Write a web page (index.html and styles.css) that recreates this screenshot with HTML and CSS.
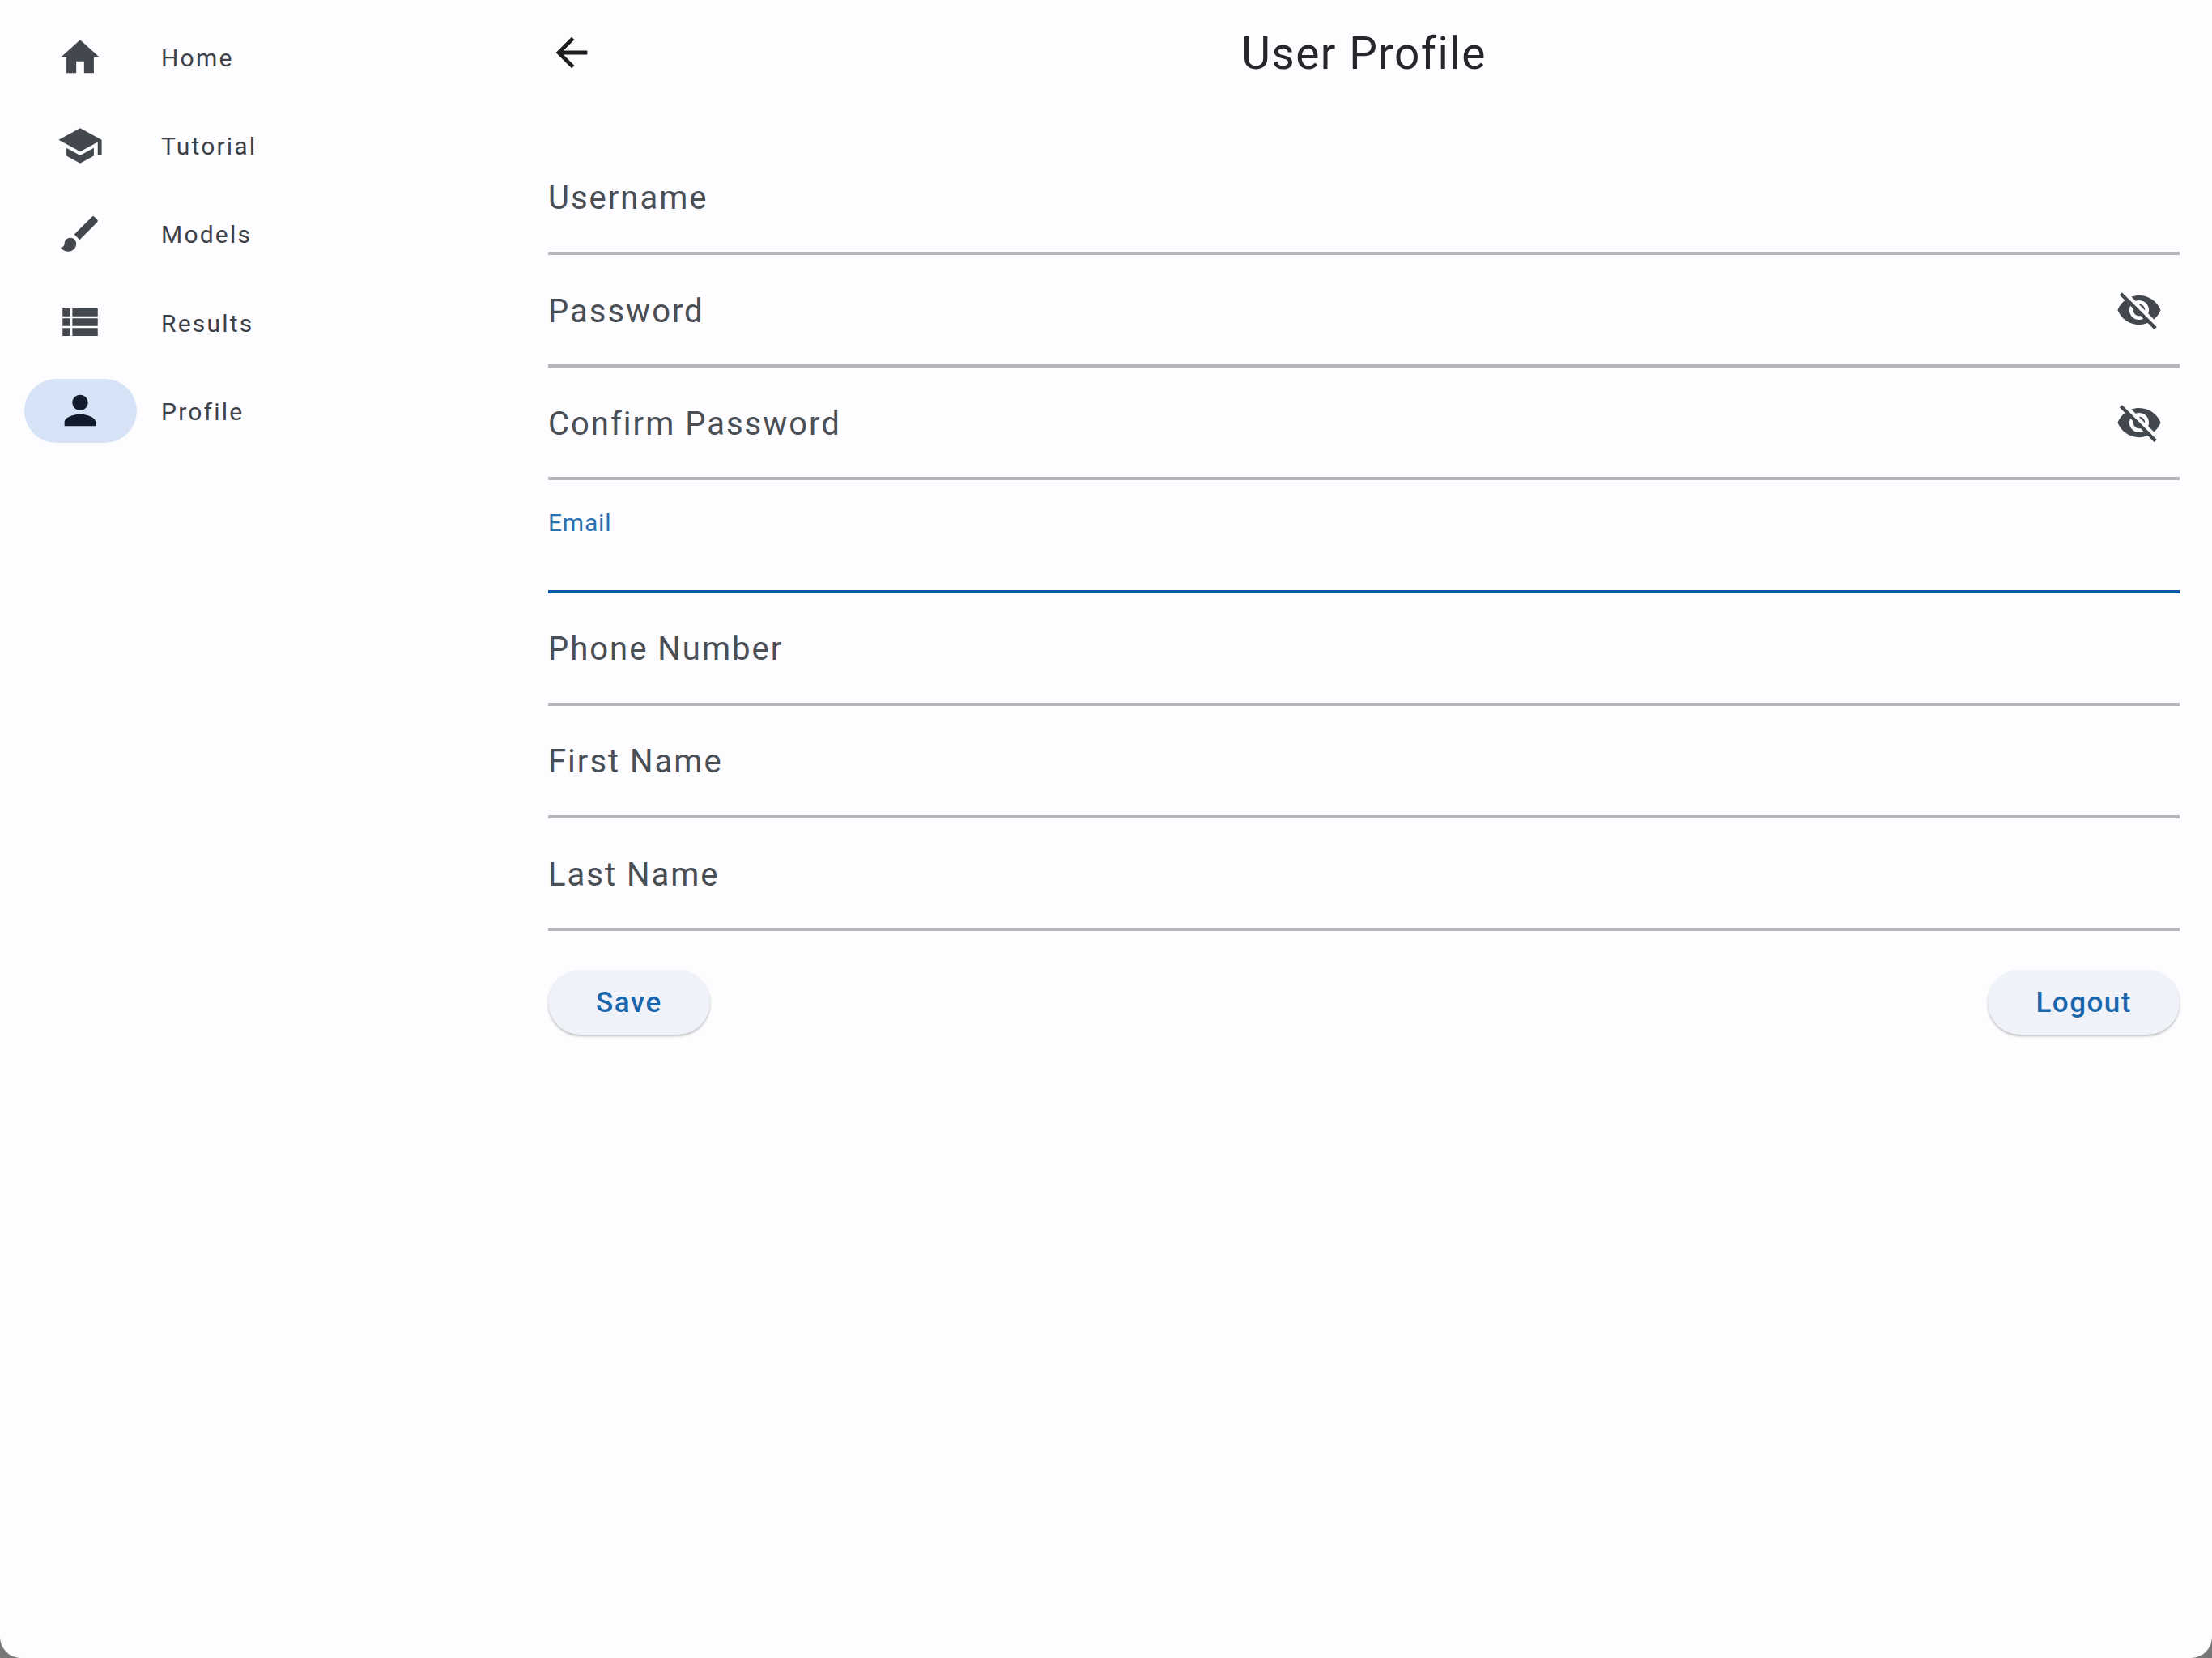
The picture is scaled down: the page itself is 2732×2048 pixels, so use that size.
FILE: index.html
```html
<!DOCTYPE html>
<html lang="en">
  <head>
    <meta charset="UTF-8" />
    <meta name="viewport" content="width=device-width, initial-scale=1.0" />
    <title>User Profile</title>
    <link rel="stylesheet" href="styles.css">
  </head>
  <body>
    <div class="window">
      <nav class="rail">
        <a class="rail-item">
          <span class="rail-pill">
            <svg class="icon" viewBox="0 0 24 24"><path d="M10 20v-6h4v6h5v-8h3L12 3 2 12h3v8z"/></svg>
          </span>
          <span class="rail-label">Home</span>
        </a>
        <a class="rail-item">
          <span class="rail-pill">
            <svg class="icon" viewBox="0 0 24 24"><path d="M5 13.18v4L12 21l7-3.82v-4L12 17l-7-3.82zM12 3 1 9l11 6 9-4.91V17h2V9L12 3z"/></svg>
          </span>
          <span class="rail-label">Tutorial</span>
        </a>
        <a class="rail-item">
          <span class="rail-pill">
            <svg class="icon" viewBox="0 0 24 24"><path d="M7 14c-1.66 0-3 1.34-3 3 0 1.31-1.16 2-2 2 .92 1.22 2.49 2 4 2 2.21 0 4-1.79 4-4 0-1.66-1.34-3-3-3zm13.71-9.37-1.34-1.34a.9959.9959 0 0 0-1.41 0L9 12.25 11.75 15l8.96-8.96c.39-.39.39-1.02 0-1.41z"/></svg>
          </span>
          <span class="rail-label">Models</span>
        </a>
        <a class="rail-item">
          <span class="rail-pill">
            <svg class="icon" viewBox="0 0 24 24"><path d="M3 14h4v-4H3v4zm0 5h4v-4H3v4zM3 9h4V5H3v4zm5 5h13v-4H8v4zm0 5h13v-4H8v4zM8 5v4h13V5H8z"/></svg>
          </span>
          <span class="rail-label">Results</span>
        </a>
        <a class="rail-item active">
          <span class="rail-pill">
            <svg class="icon" viewBox="0 0 24 24"><path d="M12 12c2.21 0 4-1.79 4-4s-1.79-4-4-4-4 1.79-4 4 1.79 4 4 4zm0 2c-2.67 0-8 1.34-8 4v2h16v-2c0-2.66-5.33-4-8-4z"/></svg>
          </span>
          <span class="rail-label">Profile</span>
        </a>
      </nav>

      <main class="content">
        <header class="app-bar">
          <svg class="icon back" viewBox="0 0 24 24"><path d="M20 11H7.83l5.59-5.59L12 4l-8 8 8 8 1.41-1.41L7.83 13H20v-2z"/></svg>
          <h1 class="title">User Profile</h1>
        </header>

        <form class="form">
          <div class="field"><span class="field-label">Username</span></div>
          <div class="field">
            <span class="field-label">Password</span>
            <svg class="icon eye" viewBox="0 0 24 24"><path d="M12 7c2.76 0 5 2.24 5 5 0 .65-.13 1.26-.36 1.83l2.92 2.92c1.51-1.26 2.7-2.89 3.43-4.75-1.73-4.39-6-7.5-11-7.5-1.4 0-2.74.25-3.98.7l2.16 2.16C10.74 7.13 11.35 7 12 7zM2 4.27l2.28 2.28.46.46C3.08 8.3 1.78 10.02 1 12c1.73 4.39 6 7.5 11 7.5 1.55 0 3.03-.3 4.38-.84l.42.42L19.73 22 21 20.73 3.27 3 2 4.27zM7.53 9.8l1.55 1.55c-.05.21-.08.43-.08.65 0 1.66 1.34 3 3 3 .22 0 .44-.03.65-.08l1.55 1.55c-.67.33-1.41.53-2.2.53-2.76 0-5-2.24-5-5 0-.79.2-1.53.53-2.2zm4.31-.78 3.15 3.15.02-.16c0-1.66-1.34-3-3-3l-.17.01z"/></svg>
          </div>
          <div class="field">
            <span class="field-label">Confirm Password</span>
            <svg class="icon eye" viewBox="0 0 24 24"><path d="M12 7c2.76 0 5 2.24 5 5 0 .65-.13 1.26-.36 1.83l2.92 2.92c1.51-1.26 2.7-2.89 3.43-4.75-1.73-4.39-6-7.5-11-7.5-1.4 0-2.74.25-3.98.7l2.16 2.16C10.74 7.13 11.35 7 12 7zM2 4.27l2.28 2.28.46.46C3.08 8.3 1.78 10.02 1 12c1.73 4.39 6 7.5 11 7.5 1.55 0 3.03-.3 4.38-.84l.42.42L19.73 22 21 20.73 3.27 3 2 4.27zM7.53 9.8l1.55 1.55c-.05.21-.08.43-.08.65 0 1.66 1.34 3 3 3 .22 0 .44-.03.65-.08l1.55 1.55c-.67.33-1.41.53-2.2.53-2.76 0-5-2.24-5-5 0-.79.2-1.53.53-2.2zm4.31-.78 3.15 3.15.02-.16c0-1.66-1.34-3-3-3l-.17.01z"/></svg>
          </div>
          <div class="field focused"><span class="field-label">Email</span></div>
          <div class="field"><span class="field-label">Phone Number</span></div>
          <div class="field"><span class="field-label">First Name</span></div>
          <div class="field"><span class="field-label">Last Name</span></div>

          <div class="actions">
            <button class="btn" type="button">Save</button>
            <button class="btn" type="button">Logout</button>
          </div>
        </form>
      </main>
    </div>
  </body>
</html>
```

FILE: styles.css
```css
html,
body {
  margin: 0;
  height: 100%;
  background-color: #777;
}

.window {
  display: flex;
  height: 2048px;
  box-sizing: border-box;
  background-color: #fdfcff;
  border-radius: 0 0 26px 26px;
  font-family: Roboto, "Liberation Sans", sans-serif;
  overflow: hidden;
}

.icon {
  display: block;
  width: 58px;
  height: 58px;
  fill: #43474e;
  flex-shrink: 0;
}

/* left rail */
.rail {
  width: 677px;
  flex-shrink: 0;
  box-sizing: border-box;
  padding: 31px 0 0 30px;
  display: flex;
  flex-direction: column;
  gap: 30.2px;
}

.rail-item {
  display: flex;
  align-items: center;
  gap: 30px;
}

.rail-pill {
  width: 139px;
  height: 79px;
  box-sizing: border-box;
  padding-right: 2px;
  border-radius: 40px;
  display: flex;
  align-items: center;
  justify-content: center;
}

.rail-label {
  padding-top: 2px;
  font-size: 30px;
  font-weight: 400;
  letter-spacing: 2.2px;
  color: #3d4148;
}

.active .rail-pill {
  background-color: #d6e3f7;
}

.active .icon {
  fill: #101c2b;
}

/* main column */
.content {
  flex: 1;
  box-sizing: border-box;
  padding-right: 40px;
}

.app-bar {
  height: 130px;
  display: flex;
  align-items: center;
}

.back {
  fill: #1a1c1e;
}

.title {
  flex: 1;
  margin: 0 58px 0 0;
  padding-top: 2px;
  text-align: center;
  font-size: 55px;
  font-weight: 400;
  letter-spacing: 1.5px;
  color: #25272a;
}

.form {
  display: flex;
  flex-direction: column;
  padding-top: 45.8px;
}

.field {
  height: 139.2px;
  box-sizing: border-box;
  border-bottom: 4px solid #b6b6bc;
  display: flex;
  align-items: center;
  justify-content: space-between;
}

.field-label {
  padding-top: 3px;
  font-size: 40px;
  letter-spacing: 2px;
  color: #4a4e55;
}

.eye {
  margin-right: 21px;
}

.focused {
  border-bottom-color: #0f5aa6;
  align-items: flex-start;
}

.focused .field-label {
  padding-top: 0;
  margin-top: 35px;
  font-size: 30px;
  letter-spacing: 0.8px;
  color: #2a6fb0;
}

.actions {
  display: flex;
  justify-content: space-between;
  padding-top: 48px;
}

.btn {
  height: 80px;
  padding: 0 59px;
  border: none;
  border-radius: 40px;
  background-color: #eff2f9;
  box-shadow: 0 2px 3px rgba(0, 0, 0, 0.25);
  color: #1a66ad;
  font-family: inherit;
  font-size: 35px;
  font-weight: 500;
  letter-spacing: 1.5px;
}
```
